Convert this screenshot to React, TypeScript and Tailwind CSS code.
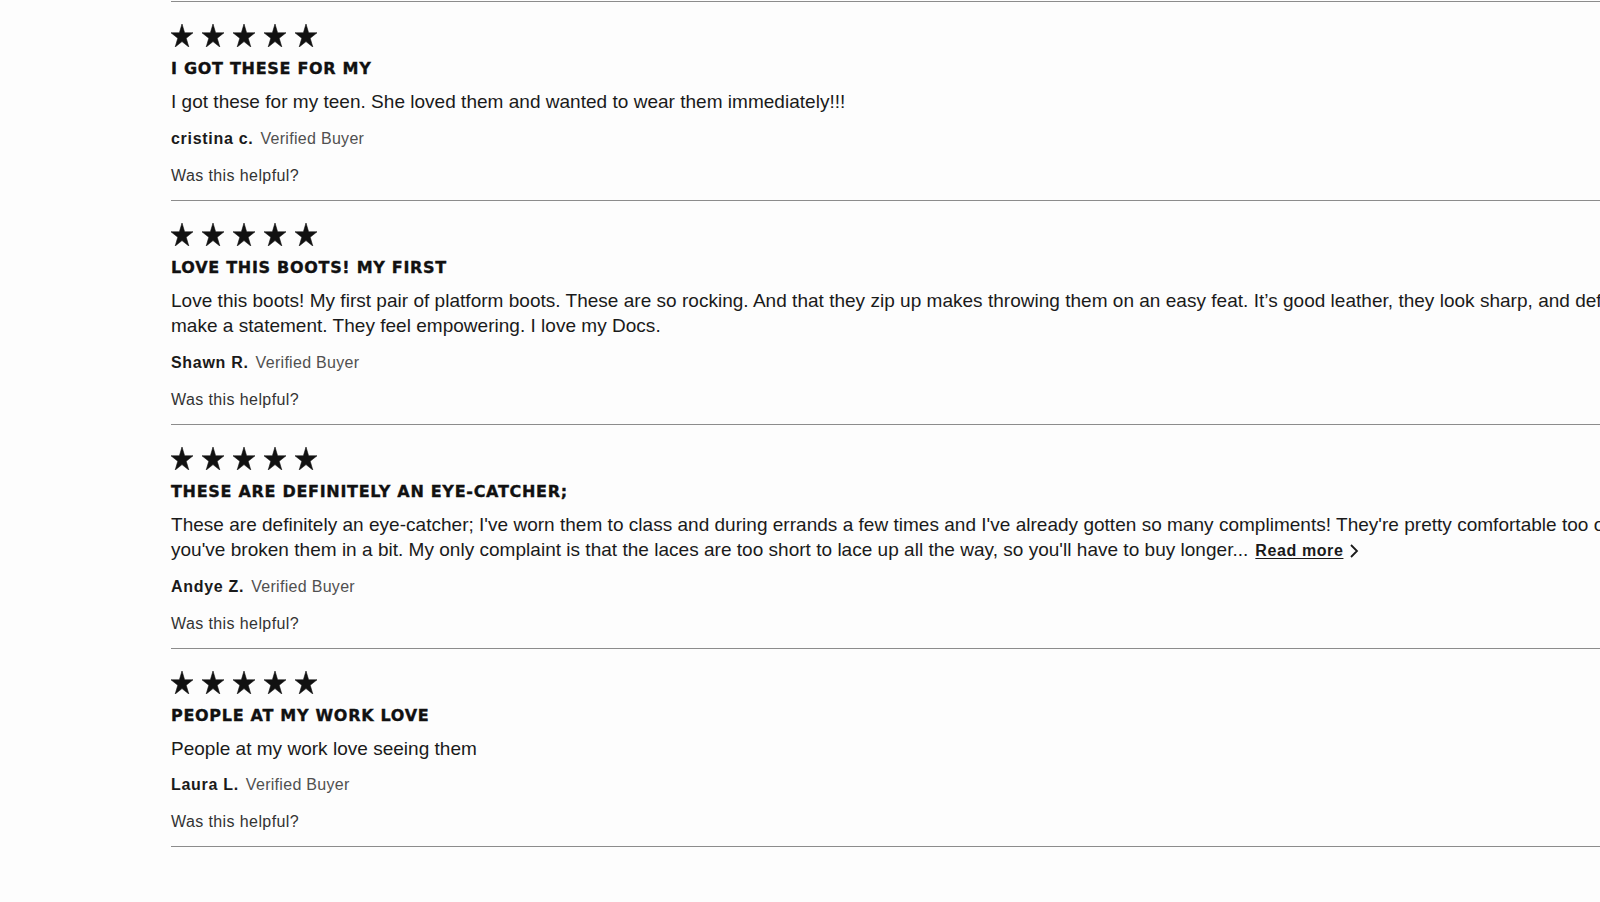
import React from 'react';

type Review = {
  title: string;
  body: string;
  author: string;
  truncated?: boolean;
};

const reviews: Review[] = [
  {
    title: 'I GOT THESE FOR MY',
    body: 'I got these for my teen. She loved them and wanted to wear them immediately!!!',
    author: 'cristina c.',
  },
  {
    title: 'LOVE THIS BOOTS! MY FIRST',
    body: 'Love this boots! My first pair of platform boots. These are so rocking. And that they zip up makes throwing them on an easy feat. It\u2019s good leather, they look sharp, and definitely make a statement. They feel empowering. I love my Docs.',
    author: 'Shawn R.',
  },
  {
    title: 'THESE ARE DEFINITELY AN EYE-CATCHER;',
    body: "These are definitely an eye-catcher; I've worn them to class and during errands a few times and I've already gotten so many compliments! They're pretty comfortable too once you've broken them in a bit. My only complaint is that the laces are too short to lace up all the way, so you'll have to buy longer...",
    author: 'Andye Z.',
    truncated: true,
  },
  {
    title: 'PEOPLE AT MY WORK LOVE',
    body: 'People at my work love seeing them',
    author: 'Laura L.',
  },
];

function Star() {
  return (
    <svg width="22" height="23" viewBox="0 0 22 23" className="shrink-0">
      <polygon
        points="11,0 13.6,8.8 22,8.8 15.2,14.2 17.8,23 11,17.6 4.2,23 6.8,14.2 0,8.8 8.4,8.8"
        fill="#111111"
        stroke="#111111"
        strokeWidth="0.6"
        strokeLinejoin="round"
      />
    </svg>
  );
}

function ReviewItem({ review }: { review: Review }) {
  return (
    <div className="border-b border-[#8c8c8c] pt-[22px] pb-[14px]">
      <div className="flex gap-[9px] h-[23px]">
        {[0, 1, 2, 3, 4].map((i) => (
          <Star key={i} />
        ))}
      </div>
      <h3 className="mt-[12px] text-[16px] leading-[20px] font-bold tracking-[0.7px] text-[#111] [-webkit-text-stroke:0.35px_#111] font-['DejaVu_Sans',sans-serif]">
        {review.title}
      </h3>
      <p className="mt-[10px] text-[19px] leading-[25.5px] tracking-[0.02px] text-[#1a1a1a]">
        {review.body}
        {review.truncated && (
          <button className="ml-[7px] inline-flex items-center gap-[6px] align-baseline text-[16px] font-bold tracking-[0.6px] text-[#1a1a1a] leading-[20px]">
            <span className="underline underline-offset-2">Read more</span>
            <svg width="10" height="16" viewBox="0 0 10 16" fill="none">
              <path d="M2 2l6 6-6 6" stroke="#1a1a1a" strokeWidth="1.8" />
            </svg>
          </button>
        )}
      </p>
      <div className="mt-[14px] flex items-baseline gap-[7px] text-[16px] leading-[20px]">
        <span className="font-bold text-[#1a1a1a] tracking-[0.7px]">{review.author}</span>
        <span className="text-[#505050] tracking-[0.3px]">Verified Buyer</span>
      </div>
      <div className="mt-[17px] text-[16px] leading-[20px] text-[#333] tracking-[0.4px]">
        Was this helpful?
      </div>
    </div>
  );
}

export default function App() {
  return (
    <div className="min-h-screen bg-[#fdfdfd] overflow-hidden font-['Liberation_Sans',Arial,sans-serif]">
      <div className="pl-[171px] pt-px">
        <div className="w-[1490px] border-t border-[#8c8c8c]">
          {reviews.map((r) => (
            <ReviewItem key={r.author} review={r} />
          ))}
        </div>
      </div>
    </div>
  );
}
